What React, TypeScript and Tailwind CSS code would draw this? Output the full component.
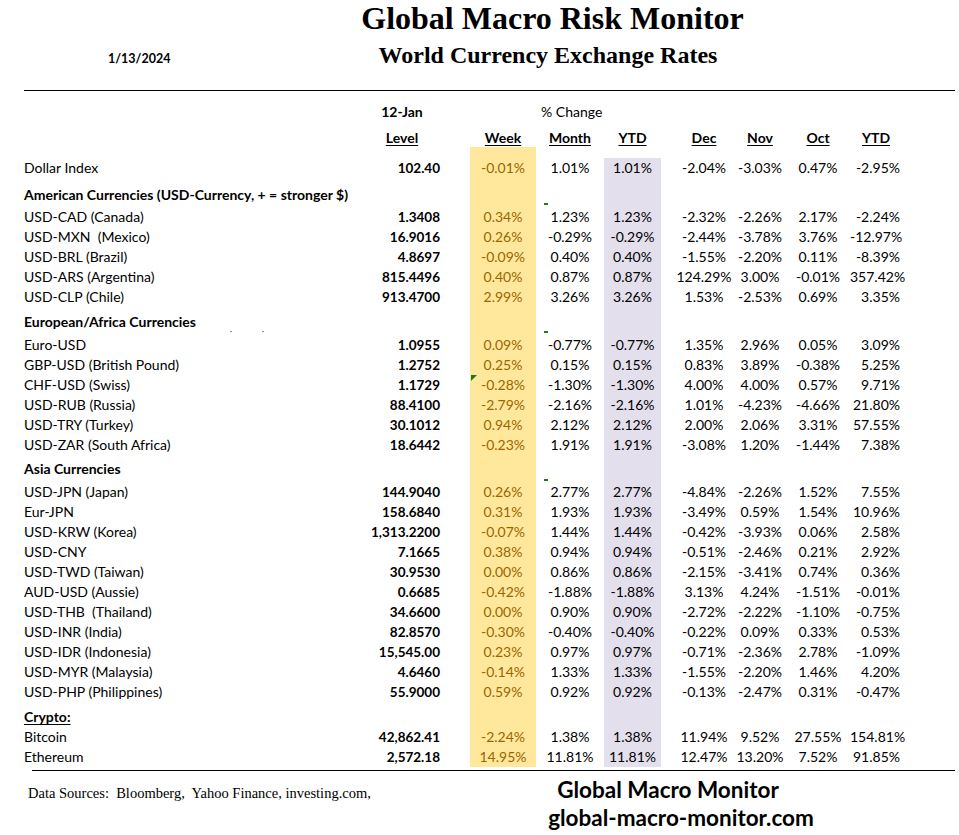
import React from "react";

type R = [string, string, string, string, string, string, string, string, string];

const dollar: R = ["Dollar Index", "102.40", "-0.01%", "1.01%", "1.01%", "-2.04%", "-3.03%", "0.47%", "-2.95%"];

const american: R[] = [
  ["USD-CAD (Canada)", "1.3408", "0.34%", "1.23%", "1.23%", "-2.32%", "-2.26%", "2.17%", "-2.24%"],
  ["USD-MXN  (Mexico)", "16.9016", "0.26%", "-0.29%", "-0.29%", "-2.44%", "-3.78%", "3.76%", "-12.97%"],
  ["USD-BRL (Brazil)", "4.8697", "-0.09%", "0.40%", "0.40%", "-1.55%", "-2.20%", "0.11%", "-8.39%"],
  ["USD-ARS (Argentina)", "815.4496", "0.40%", "0.87%", "0.87%", "124.29%", "3.00%", "-0.01%", "357.42%"],
  ["USD-CLP (Chile)", "913.4700", "2.99%", "3.26%", "3.26%", "1.53%", "-2.53%", "0.69%", "3.35%"],
];

const european: R[] = [
  ["Euro-USD", "1.0955", "0.09%", "-0.77%", "-0.77%", "1.35%", "2.96%", "0.05%", "3.09%"],
  ["GBP-USD (British Pound)", "1.2752", "0.25%", "0.15%", "0.15%", "0.83%", "3.89%", "-0.38%", "5.25%"],
  ["CHF-USD (Swiss)", "1.1729", "-0.28%", "-1.30%", "-1.30%", "4.00%", "4.00%", "0.57%", "9.71%"],
  ["USD-RUB (Russia)", "88.4100", "-2.79%", "-2.16%", "-2.16%", "1.01%", "-4.23%", "-4.66%", "21.80%"],
  ["USD-TRY (Turkey)", "30.1012", "0.94%", "2.12%", "2.12%", "2.00%", "2.06%", "3.31%", "57.55%"],
  ["USD-ZAR (South Africa)", "18.6442", "-0.23%", "1.91%", "1.91%", "-3.08%", "1.20%", "-1.44%", "7.38%"],
];

const asia: R[] = [
  ["USD-JPN (Japan)", "144.9040", "0.26%", "2.77%", "2.77%", "-4.84%", "-2.26%", "1.52%", "7.55%"],
  ["Eur-JPN", "158.6840", "0.31%", "1.93%", "1.93%", "-3.49%", "0.59%", "1.54%", "10.96%"],
  ["USD-KRW (Korea)", "1,313.2200", "-0.07%", "1.44%", "1.44%", "-0.42%", "-3.93%", "0.06%", "2.58%"],
  ["USD-CNY", "7.1665", "0.38%", "0.94%", "0.94%", "-0.51%", "-2.46%", "0.21%", "2.92%"],
  ["USD-TWD (Taiwan)", "30.9530", "0.00%", "0.86%", "0.86%", "-2.15%", "-3.41%", "0.74%", "0.36%"],
  ["AUD-USD (Aussie)", "0.6685", "-0.42%", "-1.88%", "-1.88%", "3.13%", "4.24%", "-1.51%", "-0.01%"],
  ["USD-THB  (Thailand)", "34.6600", "0.00%", "0.90%", "0.90%", "-2.72%", "-2.22%", "-1.10%", "-0.75%"],
  ["USD-INR (India)", "82.8570", "-0.30%", "-0.40%", "-0.40%", "-0.22%", "0.09%", "0.33%", "0.53%"],
  ["USD-IDR (Indonesia)", "15,545.00", "0.23%", "0.97%", "0.97%", "-0.71%", "-2.36%", "2.78%", "-1.09%"],
  ["USD-MYR (Malaysia)", "4.6460", "-0.14%", "1.33%", "1.33%", "-1.55%", "-2.20%", "1.46%", "4.20%"],
  ["USD-PHP (Philippines)", "55.9000", "0.59%", "0.92%", "0.92%", "-0.13%", "-2.47%", "0.31%", "-0.47%"],
];

const crypto: R[] = [
  ["Bitcoin", "42,862.41", "-2.24%", "1.38%", "1.38%", "11.94%", "9.52%", "27.55%", "154.81%"],
  ["Ethereum", "2,572.18", "14.95%", "11.81%", "11.81%", "12.47%", "13.20%", "7.52%", "91.85%"],
];

const GRID =
  "grid grid-cols-[336px_84px_26px_66px_68px_57px_13px_60px_52px_64px_52px] pl-[24px]";

function Row({ r, mark }: { r: R; mark?: boolean }) {
  return (
    <div className={`${GRID} h-[20px] leading-[20px]`}>
      <div className="whitespace-pre">{r[0]}</div>
      <div className="text-right pr-[4px] font-bold text-[13.5px]">{r[1]}</div>
      <div />
      <div className="relative bg-[#FFE89C] text-center text-[#9C6500]">
        {mark && (
          <span className="absolute left-[1px] top-0 h-0 w-0 border-t-[6px] border-r-[6px] border-t-[#1f7a1f] border-r-transparent" />
        )}
        {r[2]}
      </div>
      <div className="text-center">{r[3]}</div>
      <div className="bg-[#E4DFEC] text-center">{r[4]}</div>
      <div />
      <div className="text-center">{r[5]}</div>
      <div className="text-center">{r[6]}</div>
      <div className="text-center">{r[7]}</div>
      <div className="text-right pr-[2px]">{r[8]}</div>
    </div>
  );
}

function Section({
  title,
  h,
  pt,
  underline,
  dash,
  dots,
}: {
  title: string;
  h: string;
  pt: string;
  underline?: boolean;
  dash?: string;
  dots?: boolean;
}) {
  return (
    <div className={`${GRID} ${h} leading-[20px]`}>
      <div className={`relative whitespace-nowrap font-bold ${pt}`}>
        <span className={underline ? "underline underline-offset-2" : ""}>{title}</span>
        {dots && (
          <>
            <span className="absolute left-[206px] bottom-[3px] h-[1px] w-[2px] bg-[#8a8a8a]" />
            <span className="absolute left-[238px] bottom-[3px] h-[1px] w-[2px] bg-[#8a8a8a]" />
          </>
        )}
      </div>
      <div />
      <div />
      <div className="bg-[#FFE89C]" />
      <div className="relative">
        {dash && <span className={`absolute left-[8px] ${dash} h-[2px] w-[4px] bg-[#1f7a1f]`} />}
      </div>
      <div className="bg-[#E4DFEC]" />
      <div />
      <div />
      <div />
      <div />
      <div />
    </div>
  );
}

export default function App() {
  return (
    <div className="w-[959px] h-[835px] bg-white text-black overflow-hidden [font-family:Lato,'Open_Sans',sans-serif] text-[14px]">
      {/* Title */}
      <div className="h-[36px] leading-[36px] pl-[146px] text-center [font-family:'Liberation_Serif',serif] font-bold text-[32px]">
        Global Macro Risk Monitor
      </div>
      <div className="flex items-baseline h-[38px]">
        <div className="w-[270px] pl-[108px] font-bold text-[12.5px]">1/13/2024</div>
        <div className="w-[556px] text-center leading-[38px] [font-family:'Liberation_Serif',serif] font-bold text-[24px]">
          World Currency Exchange Rates
        </div>
      </div>
      <div className="mt-[16px] ml-[24px] mr-[4px] border-t border-black" />

      {/* Column headers */}
      <div className={`${GRID} mt-[11px] h-[20px] leading-[20px]`}>
        <div />
        <div className="text-center font-bold">12-Jan</div>
        <div />
        <div />
        <div className="pl-[5px] whitespace-nowrap">% Change</div>
        <div />
        <div />
        <div />
        <div />
        <div />
        <div />
      </div>
      <div className={`${GRID} mt-[6px] h-[19px] leading-[19px] font-bold`}>
        <div />
        <div className="text-center underline underline-offset-2">Level</div>
        <div />
        <div className="text-center underline underline-offset-2">Week</div>
        <div className="text-center underline underline-offset-2">Month</div>
        <div className="text-center underline underline-offset-2">YTD</div>
        <div />
        <div className="text-center underline underline-offset-2">Dec</div>
        <div className="text-center underline underline-offset-2">Nov</div>
        <div className="text-center underline underline-offset-2">Oct</div>
        <div className="text-center underline underline-offset-2">YTD</div>
      </div>

      {/* Spacer with yellow only */}
      <div className={`${GRID} h-[11px]`}>
        <div />
        <div />
        <div />
        <div className="bg-[#FFE89C]" />
      </div>

      <Row r={dollar} />

      <Section title="American Currencies (USD-Currency, + = stronger $)" h="h-[29px]" pt="pt-[7px]" dash="top-[25px]" />
      {american.map((r) => (
        <Row key={r[0]} r={r} />
      ))}

      <Section title="European/Africa Currencies" h="h-[28px]" pt="pt-[5px]" dash="top-[24px]" dots />
      {european.map((r) => (
        <Row key={r[0]} r={r} mark={r[0].startsWith("CHF")} />
      ))}

      <Section title="Asia Currencies" h="h-[27px]" pt="pt-[4px]" dash="top-[24px]" />
      {asia.map((r) => (
        <Row key={r[0]} r={r} />
      ))}

      <Section title="Crypto:" h="h-[25px]" pt="pt-[5px]" underline />
      {crypto.map((r) => (
        <Row key={r[0]} r={r} />
      ))}

      <div className="mt-[3px] ml-[32px] mr-[4px] border-t border-black" />

      {/* Footer */}
      <div className="flex items-baseline mt-[5px]">
        <div className="w-[540px] pl-[28px] whitespace-pre [font-family:'Liberation_Serif',serif] text-[14.5px] leading-[26px]">
          {"Data Sources:  Bloomberg,  Yahoo Finance, investing.com,"}
        </div>
        <div className="w-[282px] font-bold text-[22.5px] leading-[28px]">
          <div className="pr-[26px] text-center">Global Macro Monitor</div>
          <div className="text-center">global-macro-monitor.com</div>
        </div>
      </div>
    </div>
  );
}
